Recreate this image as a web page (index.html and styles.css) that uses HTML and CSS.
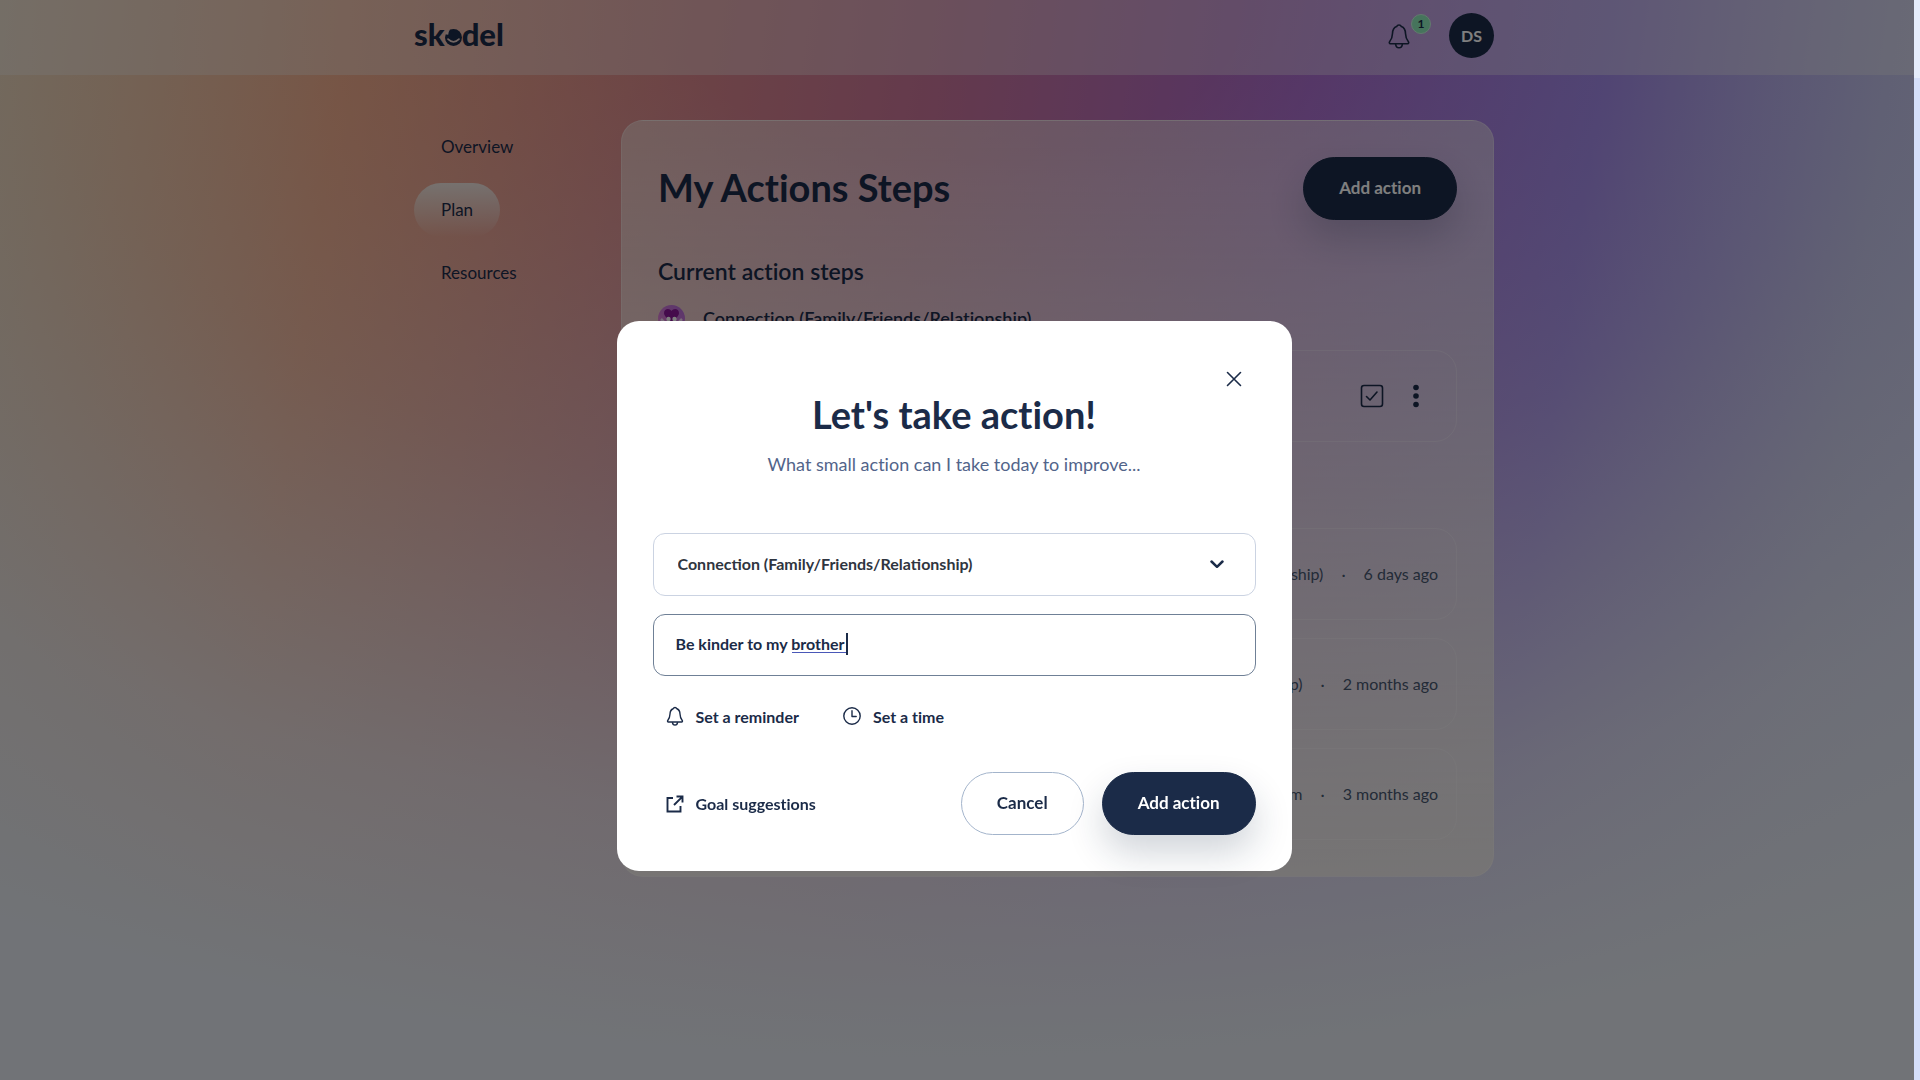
FILE: index.html
```
<!DOCTYPE html>
<html lang="en">
<head>
	<meta charset="UTF-8">
	<meta name="viewport" content="width=device-width, initial-scale=1.0">
	<title>Skodel - My Actions Steps</title>
	<link rel="stylesheet" href="styles.css">
</head>
<body>
<div class="page">
	<header class="topbar">
		<div class="container topbar-inner">
			<a class="logo" href="#" aria-label="skodel">
				<span>sk</span>
				<svg width="17" height="17" viewBox="0 0 18 18" aria-hidden="true">
					<circle cx="9" cy="9" r="9" fill="#1b2b48"/>
					<path d="M0 5.5Q1 2 5 0.8Q3.4 3.6 3.4 6Z" fill="#e5ccc6"/>
					<path d="M3.2 10.8Q9 16.6 14.8 10.8" fill="none" stroke="#e5ccc6" stroke-width="1.8" stroke-linecap="round"/>
				</svg>
				<span>del</span>
			</a>
			<div class="topbar-right">
				<button type="button" class="icon-button" aria-label="Notifications">
					<svg width="22" height="26" viewBox="0 0 22 26" fill="none" stroke="currentColor" stroke-width="1.6" stroke-linejoin="round">
						<path d="M11 2C9.6 2 9 2.7 8.6 3.6C5.6 4.7 4.6 7.3 4.5 10.5C4.4 14.4 3.6 16.4 1.6 18.8C1 19.6 1.3 20.8 2.4 20.8H19.6C20.7 20.8 21 19.6 20.4 18.8C18.4 16.4 17.6 14.4 17.5 10.5C17.4 7.3 16.4 4.7 13.4 3.6C13 2.7 12.4 2 11 2Z"/>
						<path d="M7.6 21C7.8 23.3 9.2 24.8 11 24.8C12.8 24.8 14.2 23.3 14.4 21"/>
					</svg>
					<span class="badge">1</span>
				</button>
				<button type="button" class="avatar">DS</button>
			</div>
		</div>
	</header>

	<div class="container layout">
		<nav class="sidebar">
			<a href="#">Overview</a>
			<a href="#" class="active">Plan</a>
			<a href="#">Resources</a>
		</nav>

		<main class="panel">
			<div class="panel-header">
				<h1>My Actions Steps</h1>
				<button type="button" class="button button-primary">Add action</button>
			</div>

			<h2>Current action steps</h2>
			<div class="category">
				<svg width="27" height="27" viewBox="0 0 27 27" aria-hidden="true">
					<defs>
						<linearGradient id="connection" x1="1" y1="0" x2="0" y2="1">
							<stop offset="0" stop-color="#b06ad8"/>
							<stop offset="1" stop-color="#e880d0"/>
						</linearGradient>
					</defs>
					<circle cx="13.5" cy="13.5" r="13.5" fill="url(#connection)"/>
					<path d="M13.5 18C10 14.5 6 11 6 8C6 3.5 11.5 2.5 13.5 6C15.5 2.5 21 3.5 21 8C21 11 17 14.5 13.5 18Z" fill="#8a1698"/>
					<circle cx="10.5" cy="14" r="2.2" fill="#fff"/>
					<circle cx="16.5" cy="14" r="2.2" fill="#fff"/>
					<path d="M3 14L8 19V24M24 14L19 19V24M11 17V24M16 17V24" stroke="#f6d9f6" stroke-width="2.5" fill="none"/>
				</svg>
				<h3>Connection (Family/Friends/Relationship)</h3>
			</div>
			<div class="step">
				<div class="step-tools">
					<button type="button" class="icon-button" aria-label="Complete action">
						<svg width="24" height="24" viewBox="0 0 24 24" fill="none" stroke="currentColor" stroke-width="1.6" stroke-linecap="round" stroke-linejoin="round">
							<rect x="1.5" y="1.5" width="21" height="21" rx="2.5"/>
							<path d="M6.5 12.5L10 16L17 8"/>
						</svg>
					</button>
					<button type="button" class="icon-button" aria-label="More options">
						<svg width="6" height="24" viewBox="0 0 6 24" fill="currentColor">
							<circle cx="3" cy="3.5" r="2.8"/>
							<circle cx="3" cy="12" r="2.8"/>
							<circle cx="3" cy="20.5" r="2.8"/>
						</svg>
					</button>
				</div>
			</div>

			<h2 class="past-title">Completed</h2>
			<div class="step">
				<p class="step-meta"><span>Connection (Family/Friends/Relationship)</span><span>·</span><span>6 days ago</span></p>
			</div>
			<div class="step">
				<p class="step-meta"><span>Connection (Family/Friends/Relationship)</span><span>·</span><span>2 months ago</span></p>
			</div>
			<div class="step">
				<p class="step-meta"><span>Self-esteem</span><span>·</span><span>3 months ago</span></p>
			</div>
		</main>
	</div>
</div>

<!-- Add action modal -->
<div class="overlay">
	<form class="modal" role="dialog" aria-labelledby="modalTitle">
		<button type="button" class="icon-button modal-close" aria-label="Close">
			<svg width="16" height="16" viewBox="0 0 16 16" stroke="currentColor" stroke-width="1.6" stroke-linecap="round">
				<path d="M1.5 1.5L14.5 14.5M14.5 1.5L1.5 14.5"/>
			</svg>
		</button>
		<h2 id="modalTitle" class="modal-title">Let's take action!</h2>
		<p class="modal-subtitle">What small action can I take today to improve...</p>

		<div class="field">
			<select aria-label="Category">
				<option>Connection (Family/Friends/Relationship)</option>
			</select>
			<svg class="chevron" width="14" height="9" viewBox="0 0 14 9" fill="none" stroke="currentColor" stroke-width="2.5" stroke-linecap="round" stroke-linejoin="round">
				<path d="M1.5 1.5L7 6.8L12.5 1.5"/>
			</svg>
		</div>
		<div class="field">
			<input type="text" aria-label="Action" value="Be kinder to my brother">
			<span class="typing-mark"></span>
		</div>

		<div class="extras">
			<button type="button" class="text-button">
				<svg width="18" height="20" viewBox="0 0 22 26" fill="none" stroke="currentColor" stroke-width="1.8" stroke-linejoin="round">
					<path d="M11 2C9.6 2 9 2.7 8.6 3.6C5.6 4.7 4.6 7.3 4.5 10.5C4.4 14.4 3.6 16.4 1.6 18.8C1 19.6 1.3 20.8 2.4 20.8H19.6C20.7 20.8 21 19.6 20.4 18.8C18.4 16.4 17.6 14.4 17.5 10.5C17.4 7.3 16.4 4.7 13.4 3.6C13 2.7 12.4 2 11 2Z"/>
					<path d="M7.6 21C7.8 23.3 9.2 24.8 11 24.8C12.8 24.8 14.2 23.3 14.4 21"/>
				</svg>
				Set a reminder
			</button>
			<button type="button" class="text-button">
				<svg width="18" height="18" viewBox="0 0 18 18" fill="none" stroke="currentColor" stroke-width="1.4" stroke-linecap="round" stroke-linejoin="round">
					<circle cx="9" cy="9" r="8.2"/>
					<path d="M9 3.8V9.5H13.2"/>
				</svg>
				Set a time
			</button>
		</div>

		<div class="modal-footer">
			<button type="button" class="text-button">
				<svg width="18" height="18" viewBox="0 0 18 18" fill="none" stroke="currentColor" stroke-width="1.9">
					<path d="M7 3H1.5V16.5H14.5V11M10.5 1.5H16.5V7.5M16.2 1.8L8 10"/>
				</svg>
				Goal suggestions
			</button>
			<div class="modal-actions">
				<button type="button" class="button button-outline">Cancel</button>
				<button type="submit" class="button button-primary">Add action</button>
			</div>
		</div>
	</form>
</div>
</body>
</html>
```
FILE: styles.css
```
* {
	box-sizing: border-box;
}
html {
	background: linear-gradient(#e6edfc 78px, #d5dffa 78px);
}
body {
	margin: 0;
	font-family: Lato, "Open Sans", sans-serif;
	font-size: 16px;
	font-variant-ligatures: none;
	color: #1b2b48;
}
h1, h2, h3, p {
	margin: 0;
}
button {
	font-family: inherit;
	font-variant-ligatures: inherit;
	color: inherit;
	cursor: pointer;
}
svg {
	flex-shrink: 0;
}
.page {
	min-height: 100vh;
	margin-right: 6px;
	padding-right: 6px;
	background:
		radial-gradient(ellipse 100% 98% at 50% 0%, rgba(228, 232, 240, 0) 15%, rgba(228, 232, 240, 0.35) 48%, rgba(228, 232, 240, 0.8) 78%, #e2e7ee 100%),
		linear-gradient(98deg, #e6c498 0%, #f09c74 17%, #dc8a88 31%, #c8749a 46%, #a868cc 64%, #9070e4 78%, #acaae4 92%, #b4b4ea 100%);
}
.container {
	width: 100%;
	max-width: 1080px;
	margin: 0 auto;
}

/* Top bar */
.topbar {
	margin-right: -6px;
	padding: 13px 6px 17px 0;
	background-color: rgba(240, 240, 240, 0.35);
}
.topbar-inner {
	display: flex;
	justify-content: space-between;
	align-items: center;
}
.logo {
	display: flex;
	align-items: baseline;
	margin-bottom: 3px;
	font-size: 31px;
	line-height: 36px;
	font-weight: 900;
	color: inherit;
	text-decoration: none;
}
.topbar-right {
	display: flex;
	align-items: center;
	gap: 28px;
}
.icon-button {
	position: relative;
	display: flex;
	align-items: center;
	justify-content: center;
	width: 44px;
	height: 44px;
	padding: 0;
	border: none;
	background: none;
}
.badge {
	position: absolute;
	top: 0;
	right: -10px;
	width: 20px;
	height: 20px;
	border: 1px solid #c4f4dc;
	border-radius: 50%;
	background-color: #8ce8b8;
	font-size: 12px;
	line-height: 18px;
	font-weight: 700;
}
.avatar {
	width: 45px;
	height: 45px;
	padding: 0;
	border: none;
	border-radius: 50%;
	background-color: #1b2b48;
	color: #fff;
	font-size: 16px;
	font-weight: 700;
}

/* Layout */
.layout {
	display: grid;
	grid-template-columns: 207px 1fr;
	align-items: start;
	padding: 45px 0;
}
.sidebar {
	display: flex;
	flex-direction: column;
	align-items: flex-start;
	gap: 9px;
}
.sidebar a {
	padding: 0 27px;
	border-radius: 27px;
	font-size: 17px;
	line-height: 54px;
	color: inherit;
	text-decoration: none;
}
.sidebar .active {
	background: linear-gradient(rgba(240, 255, 255, 0.7), rgba(255, 255, 255, 0));
}
.panel {
	padding: 36px;
	border: 1px solid rgba(255, 255, 255, 0.25);
	border-radius: 22px;
	background: linear-gradient(rgba(242, 238, 232, 0.48), rgba(242, 238, 232, 0.75));
}
.panel-header {
	display: flex;
	justify-content: space-between;
	align-items: center;
	margin-bottom: 33px;
}
.panel h1 {
	padding-bottom: 4px;
	font-size: 38px;
	line-height: 46px;
}
.panel h2 {
	font-size: 23px;
	line-height: 36px;
	font-weight: 600;
}
.category {
	display: flex;
	align-items: center;
	gap: 18px;
	margin: 16px 0 18px;
}
.category h3 {
	font-size: 18px;
	line-height: 27px;
	font-weight: 600;
}
.step {
	display: flex;
	align-items: center;
	justify-content: flex-end;
	height: 92px;
	margin-bottom: 18px;
	padding: 0 18px;
	border: 1px solid rgba(255, 255, 255, 0.25);
	border-radius: 22px;
}
.step:last-child {
	margin-bottom: 0;
}
.step-tools {
	display: flex;
}
.panel .past-title {
	margin: 32px 0 18px;
}
.step-meta {
	display: flex;
	gap: 18px;
	line-height: 24px;
	color: #46566f;
}

/* Buttons */
.button {
	height: 63px;
	padding: 0 35px 3px;
	border: 1px solid #1b2b48;
	border-radius: 32px;
	font-size: 17px;
	font-weight: 700;
}
.button-primary {
	background-color: #1b2b48;
	color: #fff;
	box-shadow: 0 18px 36px rgba(27, 43, 72, 0.2);
}
.button-outline {
	border-color: #a3b4cb;
	background-color: #fff;
}
.text-button {
	display: flex;
	align-items: center;
	gap: 12px;
	height: 44px;
	padding: 0 13px;
	border: none;
	background: none;
	font-size: 16px;
	font-weight: 700;
}

/* Modal */
.overlay {
	position: fixed;
	inset: 0 6px 0 0;
	display: flex;
	align-items: center;
	justify-content: center;
	padding: 112px 6px 0 0;
	background-color: rgba(0, 0, 0, 0.5);
}
.modal {
	position: relative;
	width: 100%;
	max-width: 675px;
	padding: 70px 36px 36px;
	border-radius: 22px;
	background-color: #fff;
}
.modal-close {
	position: absolute;
	top: 36px;
	right: 36px;
}
.modal-title {
	font-size: 38px;
	line-height: 46px;
	text-align: center;
}
.modal-subtitle {
	margin: 13px 0 55px;
	font-size: 18px;
	line-height: 28px;
	text-align: center;
	color: #52648a;
}
.field {
	position: relative;
	margin-bottom: 18px;
}
.field select,
.field input {
	display: block;
	width: 100%;
	height: 63px;
	padding: 0 24px 3px;
	border: 1px solid #cbd3e2;
	border-radius: 12px;
	background-color: #fff;
	font-family: inherit;
	font-size: 16px;
	font-weight: 700;
	color: #2f3540;
	outline: none;
	appearance: none;
}
.field input {
	height: 62px;
	padding: 0 22px 3px;
	border-color: #6f8096;
	color: #1b2b48;
}
.chevron {
	position: absolute;
	top: 27px;
	right: 32px;
}
/* Underline and caret of the word being typed */
.typing-mark {
	position: absolute;
	top: 19px;
	left: 139px;
	width: 56px;
	height: 22px;
	border-right: 2px solid #1b2b48;
	pointer-events: none;
}
.typing-mark::after {
	content: "";
	position: absolute;
	left: 0;
	right: 0;
	bottom: 2px;
	height: 1px;
	background-color: #4a58b8;
}
.extras {
	display: flex;
	gap: 18px;
	margin-bottom: 34px;
}
.modal-footer {
	display: flex;
	justify-content: space-between;
	align-items: center;
}
.modal-actions {
	display: flex;
	gap: 18px;
}
@media (max-width: 700px) {
	.layout {
		grid-template-columns: 1fr;
	}
	.modal-footer {
		flex-wrap: wrap;
	}
}
```
